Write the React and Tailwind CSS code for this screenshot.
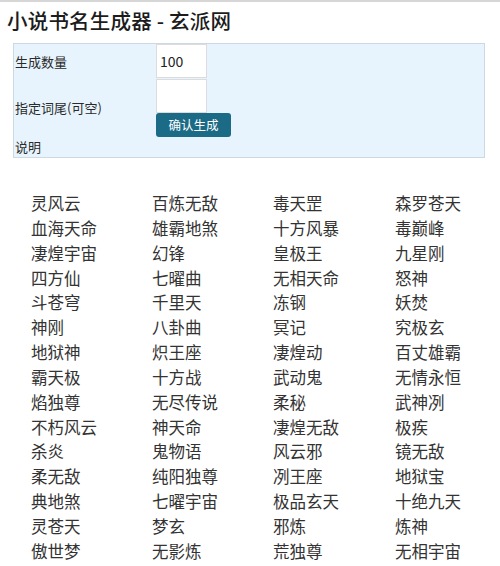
const NAMES = [
  ['灵风云', '百炼无敌', '毒天罡', '森罗苍天'],
  ['血海天命', '雄霸地煞', '十方风暴', '毒巅峰'],
  ['凄煌宇宙', '幻锋', '皇极王', '九星刚'],
  ['四方仙', '七曜曲', '无相天命', '怒神'],
  ['斗苍穹', '千里天', '冻钢', '妖焚'],
  ['神刚', '八卦曲', '冥记', '究极玄'],
  ['地狱神', '炽王座', '凄煌动', '百丈雄霸'],
  ['霸天极', '十方战', '武动鬼', '无情永恒'],
  ['焰独尊', '无尽传说', '柔秘', '武神冽'],
  ['不朽风云', '神天命', '凄煌无敌', '极疾'],
  ['杀炎', '鬼物语', '风云邪', '镜无敌'],
  ['柔无敌', '纯阳独尊', '冽王座', '地狱宝'],
  ['典地煞', '七曜宇宙', '极品玄天', '十绝九天'],
  ['灵苍天', '梦玄', '邪炼', '炼神'],
  ['傲世梦', '无影炼', '荒独尊', '无相宇宙'],
];

export default function App() {
  return (
    <div
      className="w-[500px] h-[566px] overflow-hidden bg-white border-t-2 border-[#d6d6d6]"
      style={{ fontFamily: '"Noto Sans CJK SC", "Noto Sans", sans-serif' }}
    >
      {/* title */}
      <h1 className="pl-[7px] pt-[4px] h-[41px] text-[20.5px] leading-[28px] font-medium tracking-[0.2px] text-[#1c1c1c]">
        小说书名生成器 - 玄派网
      </h1>

      {/* form panel */}
      <div className="ml-[13px] w-[472px] border border-[#cdd9e2] bg-[#e7f4fd] pl-[1px] text-[13px] text-[#2a2a2a]">
        <div className="flex h-[35px]">
          <div className="w-[141px] flex items-center">生成数量</div>
          <div>
            <input
              defaultValue="100"
              className="w-[51px] h-[34px] bg-white border border-[#dcdcdc] px-[3px] text-[14px] text-[#222] outline-none"
            />
          </div>
        </div>
        <div className="flex h-[58px]">
          <div className="w-[141px] flex items-center">指定词尾(可空)</div>
          <div className="flex flex-col items-start">
            <input className="w-[51px] h-[34px] bg-white border border-[#dcdcdc] outline-none" />
            <button className="w-[75px] h-[24px] rounded-[3px] bg-[#1b6a86] text-white text-[12.5px] leading-none">
              确认生成
            </button>
          </div>
        </div>
        <div className="h-[20px] flex items-center">说明</div>
      </div>

      {/* generated names */}
      <div className="mt-[33px] pl-[31px] grid grid-cols-[121px_121px_122px_1fr] text-[16.5px] leading-[24.85px] text-[#333]">
        {NAMES.flat().map((n, i) => (
          <div key={i} className="whitespace-nowrap">{n}</div>
        ))}
      </div>
    </div>
  );
}
